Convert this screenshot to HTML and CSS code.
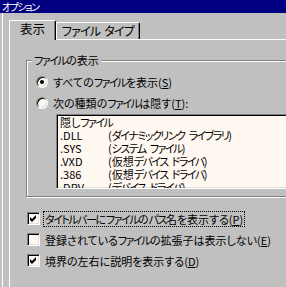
FILE: index.html
```html
<!DOCTYPE html>
<html lang="ja">
<head>
<meta charset="utf-8">
<link rel="stylesheet" href="styles.css">
</head>
<body>
<div class="window">
  <div class="titlebar"><span class="k">オプション</span></div>
  <div class="client">
    <div class="tabs">
      <div class="tab active">表示</div>
      <div class="tab"><span class="k">ファイル タイプ</span></div>
    </div>
    <div class="panel">
      <div class="group">
        <div class="group-label"><span class="k">ファイル</span>の表示</div>
        <div class="radio-row"><span class="radio checked"></span><span class="txt">すべての<span class="k">ファイル</span>を表示(<u>S</u>)</span></div>
        <div class="radio-row"><span class="radio"></span><span class="txt">次の種類の<span class="k">ファイル</span>は隠す(<u>T</u>):</span></div>
        <div class="listbox">
          <div class="item"><span class="ext">隠し<span class="k">ファイル</span></span></div>
          <div class="item"><span class="ext">.DLL</span><span class="desc">(<span class="k">ダイナミックリンク ライブラリ</span>)</span></div>
          <div class="item"><span class="ext">.SYS</span><span class="desc">(<span class="k">システム ファイル</span>)</span></div>
          <div class="item"><span class="ext">.VXD</span><span class="desc">(仮想<span class="k">デバイス ドライバ</span>)</span></div>
          <div class="item"><span class="ext">.386</span><span class="desc">(仮想<span class="k">デバイス ドライバ</span>)</span></div>
          <div class="item"><span class="ext">.DRV</span><span class="desc">(<span class="k">デバイス ドライバ</span>)</span></div>
        </div>
      </div>
      <div class="checks">
        <div class="check-row"><span class="checkbox"><svg width="7" height="7" viewBox="0 0 7 7"><polygon points="0,2 2,4 6,0 6,3 2,7 0,5" fill="#000"/></svg></span><span class="txt focus"><span class="k">タイトルバー</span>に<span class="k">ファイル</span>の<span class="k">パス</span>名を表示する(<u>P</u>)</span></div>
        <div class="check-row"><span class="checkbox"></span><span class="txt">登録されている<span class="k">ファイル</span>の拡張子は表示しない(<u>E</u>)</span></div>
        <div class="check-row"><span class="checkbox"><svg width="7" height="7" viewBox="0 0 7 7"><polygon points="0,2 2,4 6,0 6,3 2,7 0,5" fill="#000"/></svg></span><span class="txt">境界の左右に説明を表示する(<u>D</u>)</span></div>
      </div>
    </div>
  </div>
</div>
</body>
</html>
```

FILE: styles.css
```css
html, body {
  margin: 0;
  padding: 0;
  background: #c0c0c0;
  overflow: hidden;
}
body {
  font-family: "Noto Sans CJK JP", "Noto Sans", sans-serif;
  font-size: 11px;
  font-feature-settings: "palt";
  color: #000;
  width: 286px;
  height: 287px;
}
.k {
  letter-spacing: -1.5px;
  word-spacing: 3px;
}
.window {
  width: 360px;
  height: 287px;
  background: #c0c0c0;
}
.titlebar {
  height: 13px;
  line-height: 13px;
  background: #000080;
  color: #fff;
  font-size: 10px;
  padding-left: 2px;
  white-space: nowrap;
}
.client {
  margin-left: 2px;
  border-left: 1px solid #fff;
  height: 274px;
  padding-left: 6px;
  padding-top: 7px;
  box-sizing: border-box;
}
.tabs {
  display: flex;
  align-items: flex-end;
  height: 19px;
  position: relative;
  z-index: 1;
}
.tab {
  box-sizing: border-box;
  height: 17px;
  border-left: 1px solid #fff;
  border-top: 1px solid #fff;
  border-right: 1px solid #000;
  box-shadow: inset -1px 0 0 #808080;
  border-radius: 2px 2px 0 0;
  background: #c0c0c0;
  font-size: 12px;
  line-height: 15px;
  white-space: nowrap;
}
.tab .k {
  letter-spacing: -0.8px;
  word-spacing: 2px;
}
.tab.active {
  width: 47px;
  height: 20px;
  margin-bottom: -1px;
  padding-left: 10px;
  line-height: 16px;
  font-size: 12.5px;
}
.tab:not(.active) {
  width: 84px;
  padding-left: 5px;
}
.panel {
  border-left: 1px solid #fff;
  border-top: 1px solid #fff;
  padding-left: 16px;
  padding-top: 20px;
  height: 240px;
}
.group {
  position: relative;
  border: 1px solid #808080;
  box-shadow: inset 1px 1px 0 #fff, 1px 1px 0 #fff;
  padding: 10px 0 7px 9px;
}
.group-label {
  position: absolute;
  left: 5px;
  top: -8px;
  padding: 0 2px;
  background: #c0c0c0;
  line-height: 14px;
  white-space: nowrap;
}
.radio-row {
  display: flex;
  align-items: center;
  height: 21px;
  gap: 5px;
  white-space: nowrap;
}
.radio {
  position: relative;
  box-sizing: border-box;
  width: 12px;
  height: 12px;
  border-radius: 50%;
  border: 1px solid;
  border-color: #808080 #fff #fff #808080;
  box-shadow: inset 1px 1px 0 #000, inset -1px -1px 0 #dfdfdf;
  background: #fff8f0;
  flex: none;
}
.radio.checked::after {
  content: "";
  position: absolute;
  left: 3px;
  top: 3px;
  width: 4px;
  height: 4px;
  border-radius: 50%;
  background: #000;
}
.listbox {
  margin-top: 1px;
  margin-left: 20px;
  height: 75px;
  box-sizing: border-box;
  border: 1px solid;
  border-color: #808080 #fff #fff #808080;
  box-shadow: inset 1px 1px 0 #000, inset -1px -1px 0 #dfdfdf;
  background: #fff8f0;
  padding: 1px 0 0 3px;
  overflow: hidden;
}
.item {
  display: flex;
  height: 13px;
  line-height: 13px;
  white-space: nowrap;
}
.ext {
  width: 48px;
  flex: none;
}
.checks {
  margin-top: 11px;
  margin-left: 1px;
}
.check-row {
  display: flex;
  align-items: center;
  height: 21px;
  white-space: nowrap;
}
.checkbox {
  box-sizing: border-box;
  width: 13px;
  height: 13px;
  border: 1px solid;
  border-color: #808080 #fff #fff #808080;
  box-shadow: inset 1px 1px 0 #000, inset -1px -1px 0 #dfdfdf;
  background: #fff8f0;
  display: flex;
  align-items: center;
  justify-content: center;
  flex: none;
  margin-right: 3px;
}
.check-row .txt {
  padding: 0 1px;
  border: 1px solid transparent;
  line-height: 14px;
}
.check-row .txt.focus {
  border: 1px dotted #000;
}
u {
  text-decoration: underline;
  text-underline-offset: 1px;
}
```
